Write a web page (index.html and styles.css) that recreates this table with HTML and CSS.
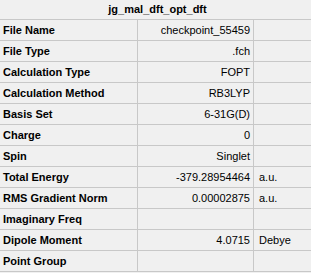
FILE: index.html
```html
<!DOCTYPE html>
<html>
<head>
<meta charset="utf-8">
<link rel="stylesheet" href="styles.css">
</head>
<body>
<div class="panel">
  <div class="title">jg_mal_dft_opt_dft</div>
  <div class="grid">
    <div class="lab">File Name</div><div class="val">checkpoint_55459</div><div class="unit"></div>
    <div class="lab">File Type</div><div class="val">.fch</div><div class="unit"></div>
    <div class="lab">Calculation Type</div><div class="val">FOPT</div><div class="unit"></div>
    <div class="lab">Calculation Method</div><div class="val">RB3LYP</div><div class="unit"></div>
    <div class="lab">Basis Set</div><div class="val">6-31G(D)</div><div class="unit"></div>
    <div class="lab">Charge</div><div class="val">0</div><div class="unit"></div>
    <div class="lab">Spin</div><div class="val">Singlet</div><div class="unit"></div>
    <div class="lab">Total Energy</div><div class="val">-379.28954464</div><div class="unit">a.u.</div>
    <div class="lab">RMS Gradient Norm</div><div class="val">0.00002875</div><div class="unit">a.u.</div>
    <div class="lab">Imaginary Freq</div><div class="val"></div><div class="unit"></div>
    <div class="lab">Dipole Moment</div><div class="val">4.0715</div><div class="unit">Debye</div>
    <div class="lab">Point Group</div><div class="val"></div><div class="unit"></div>
  </div>
</div>
</body>
</html>
```
FILE: styles.css
```css
html, body {
  margin: 0;
  padding: 0;
  background: #f0f0f0;
}
body {
  font-family: "Liberation Sans", Arial, sans-serif;
  font-size: 11px;
  color: #000;
}
.panel {
  width: 311px;
}
.title {
  height: 19px;
  line-height: 19px;
  text-align: center;
  font-weight: bold;
  border-bottom: 1px solid #c8c8c8;
  padding-left: 4px;
}
.grid {
  display: grid;
  grid-template-columns: 138px 116px 1fr;
}
.grid > div {
  height: 20px;
  line-height: 20px;
  border-bottom: 1px solid #c8c8c8;
  white-space: nowrap;
  overflow: hidden;
}
.lab {
  font-weight: bold;
  padding-left: 3px;
  border-right: 1px solid #c8c8c8;
}
.val {
  text-align: right;
  padding-right: 3px;
  border-right: 1px solid #c8c8c8;
}
.unit {
  padding-left: 5px;
}
```
